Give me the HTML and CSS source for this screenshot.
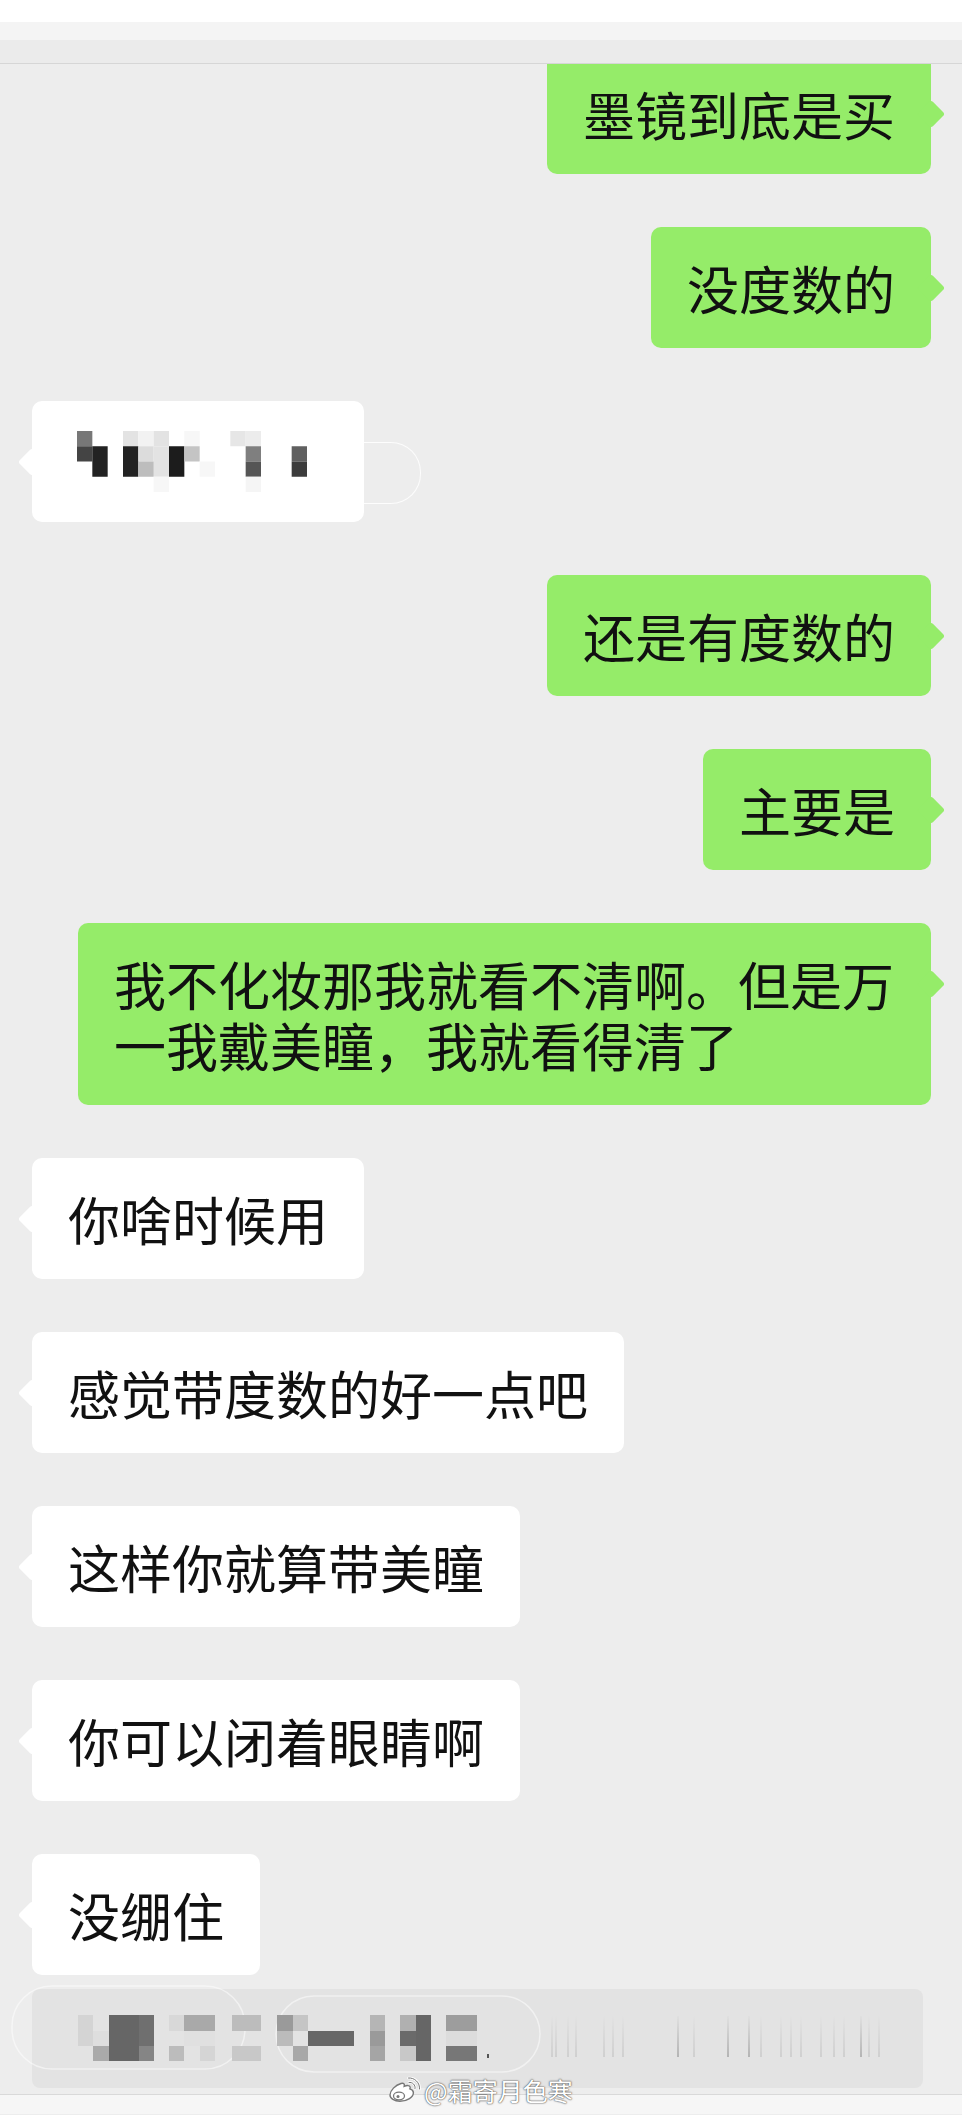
FILE: index.html
```html
<!DOCTYPE html>
<html>
<head>
    <meta charset="utf-8">
    <title>聊天记录</title>
    <link rel="stylesheet" href="styles.css">
</head>
<body>
<div class="topbar">
    <div class="topbar-white"></div>
    <div class="topbar-light"></div>
    <div class="topbar-gray"></div>
</div>

<div class="chat">
    <div class="msg me first">
        <div class="bubble">墨镜到底是买</div>
    </div>
    <div class="msg me">
        <div class="bubble">没度数的</div>
    </div>
    <div class="msg them">
        <div class="bubble blurred">
            <svg class="mosaic" viewBox="0 0 15 4" preserveAspectRatio="none">
                <rect x="0" y="0" width="1" height="1" fill="#777"/>
                <rect x="3" y="0" width="1" height="1" fill="#e3e3e3"/>
                <rect x="4" y="0" width="1" height="1" fill="#f2f2f2"/>
                <rect x="5" y="0" width="1" height="1" fill="#e3e3e3"/>
                <rect x="7" y="0" width="1" height="1" fill="#f7f7f7"/>
                <rect x="10" y="0" width="1" height="1" fill="#e6e6e6"/>
                <rect x="11" y="0" width="1" height="1" fill="#ececec"/>
                <rect x="0" y="1" width="1" height="1" fill="#444"/>
                <rect x="1" y="1" width="1" height="2" fill="#222"/>
                <rect x="3" y="1" width="1" height="2" fill="#222"/>
                <rect x="4" y="1" width="1" height="1" fill="#dcdcdc"/>
                <rect x="5" y="1" width="1" height="2" fill="#e3e3e3"/>
                <rect x="6" y="1" width="1" height="2" fill="#1c1c1c"/>
                <rect x="7" y="1" width="1" height="1" fill="#c4c4c4"/>
                <rect x="11" y="1" width="1" height="1" fill="#7f7f7f"/>
                <rect x="14" y="1" width="1" height="1" fill="#606060"/>
                <rect x="4" y="2" width="1" height="1" fill="#bdbdbd"/>
                <rect x="8" y="2" width="1" height="1" fill="#f7f7f7"/>
                <rect x="11" y="2" width="1" height="1" fill="#555"/>
                <rect x="14" y="2" width="1" height="1" fill="#3c3c3c"/>
                <rect x="5" y="3" width="1" height="1" fill="#f7f7f7"/>
                <rect x="11" y="3" width="1" height="1" fill="#f5f5f5"/>
            </svg>
        </div>
    </div>
    <div class="msg me">
        <div class="bubble">还是有度数的</div>
    </div>
    <div class="msg me">
        <div class="bubble">主要是</div>
    </div>
    <div class="msg me">
        <div class="bubble">我不化妆那我就看不清啊。但是万一我戴美瞳，我就看得清了</div>
    </div>
    <div class="msg them">
        <div class="bubble">你啥时候用</div>
    </div>
    <div class="msg them">
        <div class="bubble">感觉带度数的好一点吧</div>
    </div>
    <div class="msg them">
        <div class="bubble">这样你就算带美瞳</div>
    </div>
    <div class="msg them">
        <div class="bubble">你可以闭着眼睛啊</div>
    </div>
    <div class="msg them">
        <div class="bubble">没绷住</div>
    </div>

    <!--打码的引用消息 -->
    <div class="quote">
        <svg class="quote-mosaic" width="890" height="99" viewBox="0 0 890 99">
            <defs>
                <linearGradient id="fade" x1="0" y1="0" x2="0" y2="1">
                    <stop offset="0" stop-color="#e3e3e3"/>
                    <stop offset="1" stop-color="#cfcfcf"/>
                </linearGradient>
                <linearGradient id="fadeDark" x1="0" y1="0" x2="0" y2="1">
                    <stop offset="0" stop-color="#e0e0e0"/>
                    <stop offset="1" stop-color="#b4b4b4"/>
                </linearGradient>
            </defs>
            <rect x="-20" y="-3" width="233" height="83" rx="40" fill="none" stroke="#fff" stroke-opacity="0.5" stroke-width="1.5"/>
            <rect x="244" y="7" width="264" height="76" rx="38" fill="none" stroke="#fff" stroke-opacity="0.5" stroke-width="1.5"/>
            <rect x="46" y="26" width="15" height="31" fill="#d4d4d4"/>
            <rect x="61" y="42" width="16" height="15" fill="#dedede"/>
            <rect x="61" y="57" width="16" height="15" fill="#aaa"/>
            <rect x="77" y="26" width="30" height="46" fill="#666"/>
            <rect x="107" y="26" width="15" height="31" fill="#6f6f6f"/>
            <rect x="107" y="57" width="15" height="15" fill="#858585"/>
            <rect x="137" y="26" width="15" height="16" fill="#d8d8d8"/>
            <rect x="137" y="57" width="15" height="15" fill="#bcbcbc"/>
            <rect x="152" y="26" width="31" height="16" fill="#a9a9a9"/>
            <rect x="152" y="42" width="31" height="15" fill="#e0e0e0"/>
            <rect x="168" y="57" width="15" height="15" fill="#d5d5d5"/>
            <rect x="200" y="26" width="29" height="16" fill="#bcbcbc"/>
            <rect x="200" y="57" width="29" height="15" fill="#c8c8c8"/>
            <rect x="245" y="26" width="16" height="16" fill="#9a9a9a"/>
            <rect x="245" y="42" width="16" height="15" fill="#bbb"/>
            <rect x="261" y="26" width="15" height="16" fill="#c5c5c5"/>
            <rect x="261" y="57" width="15" height="15" fill="#a8a8a8"/>
            <rect x="276" y="42" width="46" height="15" fill="#676767"/>
            <rect x="338" y="26" width="15" height="16" fill="#b5b5b5"/>
            <rect x="338" y="42" width="15" height="15" fill="#9a9a9a"/>
            <rect x="338" y="57" width="15" height="15" fill="#a5a5a5"/>
            <rect x="368" y="26" width="16" height="16" fill="#b0b0b0"/>
            <rect x="368" y="42" width="16" height="15" fill="#6a6a6a"/>
            <rect x="368" y="57" width="16" height="15" fill="#c8c8c8"/>
            <rect x="384" y="26" width="15" height="46" fill="#666"/>
            <rect x="414" y="26" width="31" height="16" fill="#9d9d9d"/>
            <rect x="414" y="42" width="31" height="15" fill="#dcdcdc"/>
            <rect x="414" y="57" width="31" height="15" fill="#777"/>
            <rect x="455" y="65" width="2" height="4" fill="#555"/>
            <g fill="url(#fade)">
                <rect x="519" y="27" width="2" height="41"/>
                <rect x="523" y="27" width="2" height="41"/>
                <rect x="535" y="27" width="2" height="41"/>
                <rect x="543" y="27" width="2" height="41"/>
                <rect x="571" y="27" width="2" height="41"/>
                <rect x="580" y="27" width="2" height="41"/>
                <rect x="590" y="27" width="2" height="41"/>
                <rect x="661" y="27" width="2" height="41"/>
                <rect x="728" y="27" width="2" height="41"/>
                <rect x="748" y="27" width="2" height="41"/>
                <rect x="758" y="27" width="2" height="41"/>
                <rect x="768" y="27" width="2" height="41"/>
                <rect x="788" y="27" width="2" height="41"/>
                <rect x="801" y="27" width="2" height="41"/>
                <rect x="811" y="27" width="2" height="41"/>
                <rect x="836" y="27" width="2" height="41"/>
                <rect x="846" y="27" width="2" height="41"/>
            </g>
            <g fill="url(#fadeDark)">
                <rect x="645" y="27" width="2" height="41"/>
                <rect x="695" y="27" width="2" height="41"/>
                <rect x="716" y="27" width="2" height="41"/>
                <rect x="828" y="27" width="2" height="41"/>
            </g>
        </svg>
    </div>
</div>

<div class="footer">
    <div class="watermark">
        <svg class="weibo" width="38" height="28" viewBox="0 0 38 28">
            <path d="M4 19c0-4.5 5.5-10 11-11.5c2.8-.8 3.8.6 3.2 2.8c2.8-1.1 5.4-1 5.9.6c.3 1-.2 1.9-.2 1.9c2.2.7 3.5 2 3.5 3.9c0 4.3-6 8.5-13.5 8.5c-5.4 0-9.9-2.6-9.9-6.2z" fill="#fff" stroke="#777" stroke-width="1.4"/>
            <ellipse cx="13" cy="20" rx="5.5" ry="3.8" fill="none" stroke="#777" stroke-width="1.3"/>
            <circle cx="12" cy="20.5" r="1.5" fill="#777"/>
            <path d="M23 6.5a5 5 0 0 1 6 6" fill="none" stroke="#fff" stroke-width="2.6" stroke-linecap="round"/>
            <path d="M23 6.5a5 5 0 0 1 6 6" fill="none" stroke="#777" stroke-width="1" stroke-linecap="round"/>
            <path d="M22.5 2a10 10 0 0 1 11 11" fill="none" stroke="#fff" stroke-width="2.6" stroke-linecap="round"/>
            <path d="M22.5 2a10 10 0 0 1 11 11" fill="none" stroke="#777" stroke-width="1" stroke-linecap="round"/>
        </svg>
        <span>@霜寄月色寒</span>
    </div>
</div>
</body>
</html>
```

FILE: styles.css
```css
body {
    margin: 0;
    background-color: #ededed;
    font-family: "Noto Sans CJK SC", "Noto Sans", sans-serif;
    color: #111;
}

.topbar-white {
    height: 22px;
    background-color: #fff;
}

.topbar-light {
    height: 18px;
    background-color: #f4f4f4;
}

.topbar-gray {
    height: 23px;
    background-color: #ebebeb;
    border-bottom: 1px solid #d6d6d6;
}

.chat {
    overflow: hidden;
    padding: 0 31px 0 32px;
    display: flex;
    flex-direction: column;
    gap: 53px;
}

.msg {
    display: flex;
}

.msg.first {
    margin-top: -11px;
}

.msg.me {
    justify-content: flex-end;
}

.msg.them {
    justify-content: flex-start;
}

.bubble {
    position: relative;
    box-sizing: border-box;
    max-width: 853px;
    padding: 30px 36px;
    font-size: 52px;
    line-height: 61px;
    border-radius: 10px;
}

.bubble::before {
    content: "";
    position: absolute;
    top: 51px;
    width: 20px;
    height: 20px;
    border-radius: 3px;
    transform: rotate(45deg);
}

.me .bubble,
.me .bubble::before {
    background-color: #95ec69;
}

.me .bubble::before {
    right: -10px;
}

.them .bubble,
.them .bubble::before {
    background-color: #fff;
}

.them .bubble::before {
    left: -10px;
}

.blurred {
    width: 332px;
}

.blurred::after {
    content: "";
    position: absolute;
    left: 332px;
    top: 41px;
    width: 56px;
    height: 60px;
    border: 1.5px solid rgba(255, 255, 255, 0.85);
    border-left: none;
    border-radius: 0 30px 30px 0;
}

.mosaic {
    display: block;
    width: 230px;
    height: 61px;
    margin-left: 9px;
}

.quote {
    height: 99px;
    margin-top: -39px;
    margin-bottom: 6px;
    margin-right: 8px;
    background-color: #e3e3e3;
    border-radius: 8px;
}

.quote-mosaic {
    display: block;
    overflow: visible;
}

.footer {
    position: relative;
    height: 19px;
    background-color: #f6f6f6;
    border-top: 1px solid #d9d9d9;
}

.watermark {
    position: absolute;
    left: 386px;
    top: -19px;
    display: flex;
    align-items: center;
    color: #fff;
    font-size: 25px;
    line-height: 28px;
    text-shadow: 0 0 2px #555, 0 0 1px #333;
}
```
